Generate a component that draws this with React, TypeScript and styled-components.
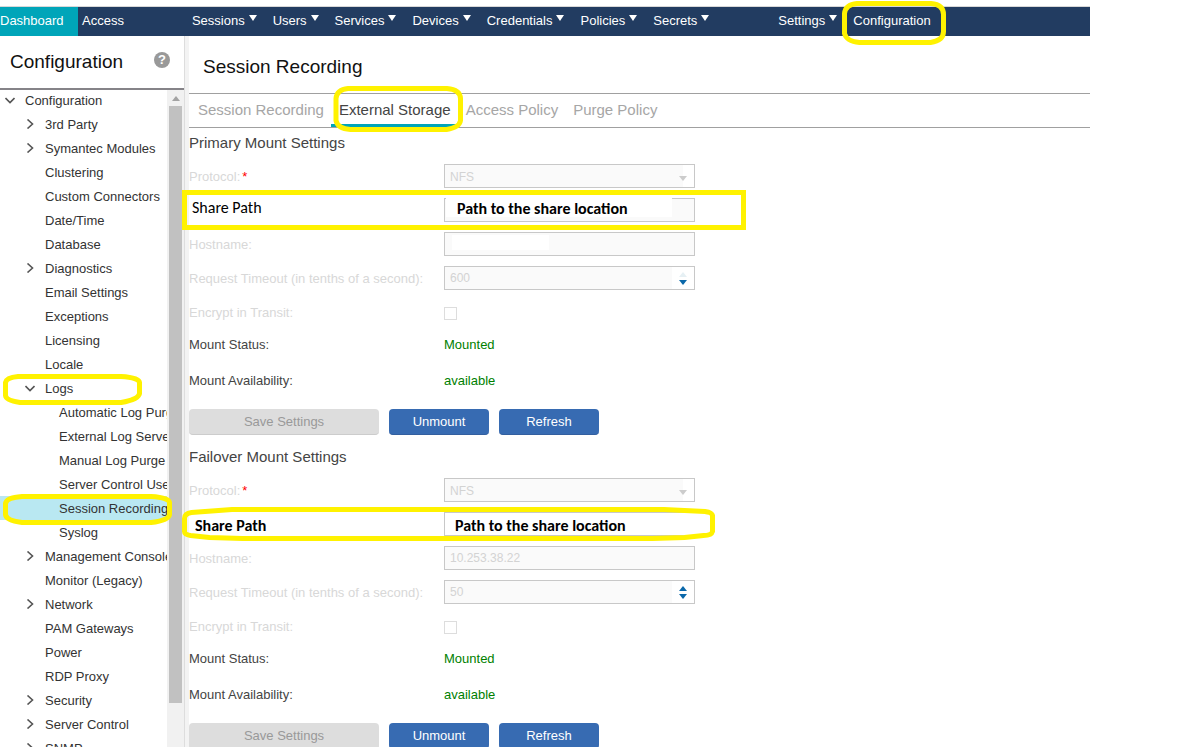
import React from "react";
import styled, { createGlobalStyle } from "styled-components";

const GlobalStyle = createGlobalStyle`
  *, *::before, *::after { box-sizing: border-box; }
  body {
    margin: 0;
    background: #fff;
    color: #444;
    font: 13px/24px "Liberation Sans", Arial, sans-serif;
  }
  button, input, select { font: inherit; margin: 0; }
  a { color: inherit; text-decoration: none; }
  ul { list-style: none; margin: 0; padding: 0; }
`;

const Page = styled.div`
  position: relative;
  display: flex;
  flex-direction: column;
  height: 100vh;
  overflow: hidden;
  padding: 6px 105px 0 0;
`;

const NavBar = styled.nav`
  display: flex;
  flex: none;
  height: 30px;
  border-top: 1px solid #d8d8d8;
  background: #223c61;
  color: #fff;
`;

const NavLink = styled.a<{ $active?: boolean }>`
  display: flex;
  align-items: center;
  padding: 0 4px 2px;
  ${(p) => p.$active && "width: 78px; padding-left: 0; background: #00a5b9;"}
`;

const NavGroup = styled.div<{ $gap: number }>`
  display: flex;
  gap: 16px;
  margin-left: ${(p) => p.$gap}px;
`;

const NavMenu = styled.button`
  display: flex;
  align-items: center;
  gap: 4px;
  padding: 0 0 2px;
  border: 0;
  background: none;
  color: inherit;
`;

const NavCaret = styled.svg`
  margin-bottom: 5px;
`;

const Body = styled.div`
  display: flex;
  flex: 1;
  min-height: 0;
`;

const Sidebar = styled.aside`
  display: flex;
  flex-direction: column;
  flex: none;
  width: 184px;
`;

const SidebarHeader = styled.header`
  position: relative;
  z-index: 1;
  display: flex;
  flex: none;
  align-items: center;
  justify-content: space-between;
  height: 54px;
  padding: 0 14px 0 10px;
  border-bottom: 2px solid #858388;
`;

const Title = styled.h1`
  margin: 0;
  color: #111;
  font-size: 19px;
  font-weight: 400;
`;

const HelpButton = styled.button`
  width: 16px;
  height: 16px;
  margin-bottom: 4px;
  padding: 0;
  border: 0;
  border-radius: 50%;
  background: #999;
  color: #fff;
  font-size: 13px;
  font-weight: 700;
  line-height: 16px;
`;

const TreeArea = styled.div`
  display: flex;
  flex: 1;
  min-height: 0;
  margin-top: -2px;
`;

const Tree = styled.ul`
  flex: 1;
  min-width: 0;
  overflow: hidden;
`;

const TreeRow = styled.li<{ $level: number; $selected?: boolean }>`
  display: flex;
  height: 24px;
  padding-left: ${(p) => [5, 25, 39][p.$level]}px;
  background: ${(p) => (p.$selected ? "#b9e8f2" : "transparent")};
  line-height: 26px;
  white-space: nowrap;
`;

const TreeToggle = styled.button`
  display: flex;
  flex: none;
  align-items: center;
  justify-content: center;
  width: 10px;
  padding: 0;
  border: 0;
  background: none;
`;

const TreeLink = styled.a<{ $indent: number }>`
  margin-left: ${(p) => p.$indent}px;
  color: #333;
`;

const ScrollTrack = styled.div`
  display: flex;
  flex-direction: column;
  align-items: center;
  width: 17px;
  padding-top: 8px;
  background: #f1f1f1;
`;

const ScrollThumb = styled.div`
  width: 13px;
  height: 597px;
  margin-top: 5px;
  background: #c1c1c1;
`;

const Splitter = styled.div`
  flex: none;
  width: 5px;
  border-left: 1px solid #ddd;
  background: #f3f3f3;
`;

const Main = styled.main`
  flex: 1;
  min-width: 0;
`;

const MainHeader = styled.header`
  display: flex;
  align-items: center;
  height: 57px;
  padding: 4px 14px 0;
`;

const Tabs = styled.div`
  display: flex;
  height: 35px;
  padding-left: 1px;
  border: solid #a0a0a0;
  border-width: 1px 0;
`;

const Tab = styled.button<{ $active?: boolean }>`
  padding: 2px 7px 0 8px;
  border: solid ${(p) => (p.$active ? "#00a5b9" : "transparent")};
  border-width: 0 0 3px;
  background: none;
  color: ${(p) => (p.$active ? "#444" : "#a6a6a6")};
  font-size: 15px;
`;

const Section = styled.section`
  height: 314px;
`;

const SectionTitle = styled.h2`
  margin: 0 0 6px;
  font-size: 15px;
  font-weight: 400;
  line-height: 30px;
`;

const Fields = styled.div`
  display: grid;
  gap: 10px;
`;

const FieldRow = styled.div`
  display: grid;
  grid-template: 24px / 255px 251px;
  align-items: center;
`;

const FieldLabel = styled.label`
  padding-top: 2px;
  color: #d8d8d8;
  line-height: 22px;
`;

const Required = styled.span`
  margin-left: 2px;
  color: #f00;
`;

const NoteLabel = styled.label<{ $bold?: boolean }>`
  padding: ${(p) => (p.$bold ? "4px 0 0 6px" : "0 0 4px 3px")};
  color: #000;
  font: ${(p) => (p.$bold ? 700 : 400)} 16px/20px Carlito, Lato, sans-serif;
`;

const Control = styled.div`
  display: flex;
  position: relative;
  height: 24px;
  border: 1px solid #c8c8c8;
  background: #fafafa;
`;

const TextInput = styled.input`
  flex: 1;
  min-width: 0;
  padding: 0 5px;
  border: 0;
  background: none;
  color: #d3d3d3;
  font-size: 12px;
`;

const NoteInput = styled.input<{ $wide?: boolean }>`
  width: ${(p) => (p.$wide ? 250 : 226)}px;
  height: ${(p) => (p.$wide ? 22 : 20)}px;
  margin: ${(p) => (p.$wide ? "0 -1px 0 0" : "-2px 0 0 1px")};
  padding: ${(p) => (p.$wide ? "2px 10px 0" : "2px 10px 0 11px")};
  border: 0;
  background: #fff;
  color: #000;
  font: 700 16px/18px Carlito, Lato, sans-serif;
`;

const MaskedInput = styled(TextInput)`
  flex: none;
  width: 97px;
  height: 15px;
  margin: 2px 0 0 7px;
  background: #fff;
`;

const Select = styled.select`
  flex: 1;
  padding: 0 5px 3px;
  border: 0;
  appearance: none;
  background: none;
  color: #d3d3d3;
  font-size: 12px;
  opacity: 1;
`;

const SelectArrow = styled.span`
  display: flex;
  align-items: center;
  width: 11px;
  padding-top: 5px;
  background: #fff;
  svg { flex: none; margin-left: -4px; }
`;

const Stepper = styled.span`
  display: flex;
  flex-direction: column;
  align-items: center;
  justify-content: center;
  gap: 3px;
  width: 22px;
  padding-top: 1px;
  background: #fff;
`;

const StepButton = styled.button`
  display: block;
  height: 5px;
  padding: 0;
  border: 0;
  background: none;
  line-height: 0;
  svg { display: block; }
`;

const Checkbox = styled.input`
  && { margin-top: 2px; }
  width: 13px;
  height: 13px;
  appearance: none;
  border: 1px solid #ddd;
  background: #fff;
`;

const StatusList = styled.dl`
  display: grid;
  grid-template-columns: 255px 1fr;
  margin: 3px 0 10px;
  line-height: 36px;
`;

const StatusName = styled.dt``;

const StatusValue = styled.dd`
  margin: 0;
  color: #008000;
`;

const Actions = styled.div`
  display: flex;
  gap: 10px;
`;

const ActionButton = styled.button<{ $wide?: boolean }>`
  width: ${(p) => (p.$wide ? 190 : 100)}px;
  height: 26px;
  padding: 1px 0 0;
  border: 0;
  border-bottom: 1px solid ${(p) => (p.$wide ? "#ccc" : "#335f9f")};
  border-radius: 4px;
  background: ${(p) => (p.$wide ? "#ddd" : "#376bb2")};
  color: ${(p) => (p.$wide ? "#999" : "#fff")};
`;

const Marks = styled.svg`
  position: absolute;
  top: 0;
  left: 0;
  pointer-events: none;
  fill: none;
  stroke: #fff200;
  stroke-width: 5;
`;

function Triangle({ color, up }: { color: string; up?: boolean }) {
  return (
    <svg width="8" height="5" viewBox="0 0 8 5" aria-hidden="true">
      <path d={up ? "M0 5 4 0l4 5z" : "M0 0h8L4 5z"} fill={color} />
    </svg>
  );
}

function Chevron({ open }: { open?: boolean }) {
  return (
    <svg width="10" height="10" viewBox="0 0 10 10" fill="none" stroke="#555" strokeWidth="1.6" aria-hidden="true">
      <path d={open ? "M.5 3 5 7.5 9.5 3" : "M2.5.5 7.5 5l-5 4.5"} />
    </svg>
  );
}

function Menu({ label }: { label: string }) {
  return (
    <NavMenu type="button">
      {label}
      <NavCaret width="8" height="6" viewBox="0 0 8 6" aria-hidden="true">
        <path d="M0 0h8L4 6z" fill="#fff" />
      </NavCaret>
    </NavMenu>
  );
}

type Item = { label: string; level: number; state?: "open" | "closed"; selected?: boolean };

const items: Item[] = [
  { label: "Configuration", level: 0, state: "open" },
  { label: "3rd Party", level: 1, state: "closed" },
  { label: "Symantec Modules", level: 1, state: "closed" },
  { label: "Clustering", level: 1 },
  { label: "Custom Connectors", level: 1 },
  { label: "Date/Time", level: 1 },
  { label: "Database", level: 1 },
  { label: "Diagnostics", level: 1, state: "closed" },
  { label: "Email Settings", level: 1 },
  { label: "Exceptions", level: 1 },
  { label: "Licensing", level: 1 },
  { label: "Locale", level: 1 },
  { label: "Logs", level: 1, state: "open" },
  { label: "Automatic Log Purge", level: 2 },
  { label: "External Log Server", level: 2 },
  { label: "Manual Log Purge", level: 2 },
  { label: "Server Control User", level: 2 },
  { label: "Session Recording", level: 2, selected: true },
  { label: "Syslog", level: 2 },
  { label: "Management Console", level: 1, state: "closed" },
  { label: "Monitor (Legacy)", level: 1 },
  { label: "Network", level: 1, state: "closed" },
  { label: "PAM Gateways", level: 1 },
  { label: "Power", level: 1 },
  { label: "RDP Proxy", level: 1 },
  { label: "Security", level: 1, state: "closed" },
  { label: "Server Control", level: 1, state: "closed" },
  { label: "SNMP", level: 1, state: "closed" },
];

function TreeItem({ label, level, state, selected }: Item) {
  return (
    <TreeRow $level={level} $selected={selected}>
      {state && (
        <TreeToggle type="button" aria-label={`Toggle ${label}`} aria-expanded={state === "open"}>
          <Chevron open={state === "open"} />
        </TreeToggle>
      )}
      <TreeLink href="#" $indent={state ? 10 : 20}>
        {label}
      </TreeLink>
    </TreeRow>
  );
}

type MountProps = {
  id: string;
  title: string;
  host?: string;
  timeout: string;
  upColor: string;
  failover?: boolean;
};

function MountSettings({ id, title, host, timeout, upColor, failover }: MountProps) {
  return (
    <Section aria-labelledby={`${id}-title`}>
      <SectionTitle id={`${id}-title`}>{title}</SectionTitle>
      <Fields>
        <FieldRow>
          <FieldLabel htmlFor={`${id}-protocol`}>
            Protocol:<Required>*</Required>
          </FieldLabel>
          <Control>
            <Select id={`${id}-protocol`} disabled>
              <option>NFS</option>
            </Select>
            <SelectArrow>
              <Triangle color="#ccc" />
            </SelectArrow>
          </Control>
        </FieldRow>
        <FieldRow>
          <NoteLabel htmlFor={`${id}-share`} $bold={failover}>
            Share Path
          </NoteLabel>
          <Control>
            <NoteInput id={`${id}-share`} $wide={failover} defaultValue="Path to the share location" />
          </Control>
        </FieldRow>
        <FieldRow>
          <FieldLabel htmlFor={`${id}-host`}>Hostname:</FieldLabel>
          <Control>
            {host ? (
              <TextInput id={`${id}-host`} disabled defaultValue={host} />
            ) : (
              <MaskedInput id={`${id}-host`} disabled />
            )}
          </Control>
        </FieldRow>
        <FieldRow>
          <FieldLabel htmlFor={`${id}-timeout`}>Request Timeout (in tenths of a second):</FieldLabel>
          <Control>
            <TextInput id={`${id}-timeout`} disabled defaultValue={timeout} />
            <Stepper>
              <StepButton type="button" aria-label="Increase">
                <Triangle up color={upColor} />
              </StepButton>
              <StepButton type="button" aria-label="Decrease">
                <Triangle color="#0a68aa" />
              </StepButton>
            </Stepper>
          </Control>
        </FieldRow>
        <FieldRow>
          <FieldLabel htmlFor={`${id}-encrypt`}>Encrypt in Transit:</FieldLabel>
          <Checkbox id={`${id}-encrypt`} type="checkbox" disabled />
        </FieldRow>
      </Fields>
      <StatusList>
        <StatusName>Mount Status:</StatusName>
        <StatusValue>Mounted</StatusValue>
        <StatusName>Mount Availability:</StatusName>
        <StatusValue>available</StatusValue>
      </StatusList>
      <Actions>
        <ActionButton type="button" $wide disabled>
          Save Settings
        </ActionButton>
        <ActionButton type="button">Unmount</ActionButton>
        <ActionButton type="button">Refresh</ActionButton>
      </Actions>
    </Section>
  );
}

export default function App() {
  return (
    <>
      <GlobalStyle />
      <Page>
        <NavBar>
          <NavLink href="#" $active>
            Dashboard
          </NavLink>
          <NavLink href="#">Access</NavLink>
          <NavGroup $gap={64}>
            {["Sessions", "Users", "Services", "Devices", "Credentials", "Policies", "Secrets"].map((m) => (
              <Menu key={m} label={m} />
            ))}
          </NavGroup>
          <NavGroup $gap={69}>
            <Menu label="Settings" />
          </NavGroup>
          <NavGroup $gap={12}>
            <NavLink href="#">Configuration</NavLink>
          </NavGroup>
        </NavBar>
        <Body>
          <Sidebar>
            <SidebarHeader>
              <Title as="h2">Configuration</Title>
              <HelpButton type="button" aria-label="Help">
                ?
              </HelpButton>
            </SidebarHeader>
            <TreeArea>
              <Tree>
                {items.map((item) => (
                  <TreeItem key={item.label + item.level} {...item} />
                ))}
              </Tree>
              <ScrollTrack>
                <Triangle up color="#a3a3a3" />
                <ScrollThumb />
              </ScrollTrack>
            </TreeArea>
          </Sidebar>
          <Splitter />
          <Main>
            <MainHeader>
              <Title>Session Recording</Title>
            </MainHeader>
            <Tabs role="tablist">
              <Tab role="tab" type="button">Session Recording</Tab>
              <Tab role="tab" type="button" aria-selected="true" $active>
                External Storage
              </Tab>
              <Tab role="tab" type="button">Access Policy</Tab>
              <Tab role="tab" type="button">Purge Policy</Tab>
            </Tabs>
            <MountSettings id="primary" title="Primary Mount Settings" timeout="600" upColor="#e6f0f4" />
            <MountSettings
              id="failover"
              title="Failover Mount Settings"
              host="10.253.38.22"
              timeout="50"
              upColor="#0a68aa"
              failover
            />
          </Main>
        </Body>
        <Marks width="960" height="560" viewBox="0 0 960 560" aria-hidden="true">
          <path d="M857 3.5h74q12.500 1 12.500 11v17q0 9-13 11h-71q-13-1-15-9v-20q1-9 12.500-10z" />
          <path d="M348 88.500h99q13 1 13.500 10v22q-1 7-14 9h-96q-13-1-14.500-9v-22q1-9 12-10z" />
          <path d="M184.500 192.500h559v35h-559z" />
          <path d="M18 376.500h103q18 1 18.500 6v11q-1 6-18.500 9h-101q-14-2-14.500-7v-13q1-5 12.500-6z" />
          <path d="M22 496.500h129q18 1 18.500 6v12q-1 6-18.500 8h-129q-16-2-16.500-8v-11q1-6 16.500-7z" />
          <path d="M232 509.500h432l41 2q7 1 7.500 4v16q-1 4-9 4l-19 2-32 1h-410l-33-1-19-2q-6-1-6-4v-13q0-5 7-6z" />
        </Marks>
      </Page>
    </>
  );
}
